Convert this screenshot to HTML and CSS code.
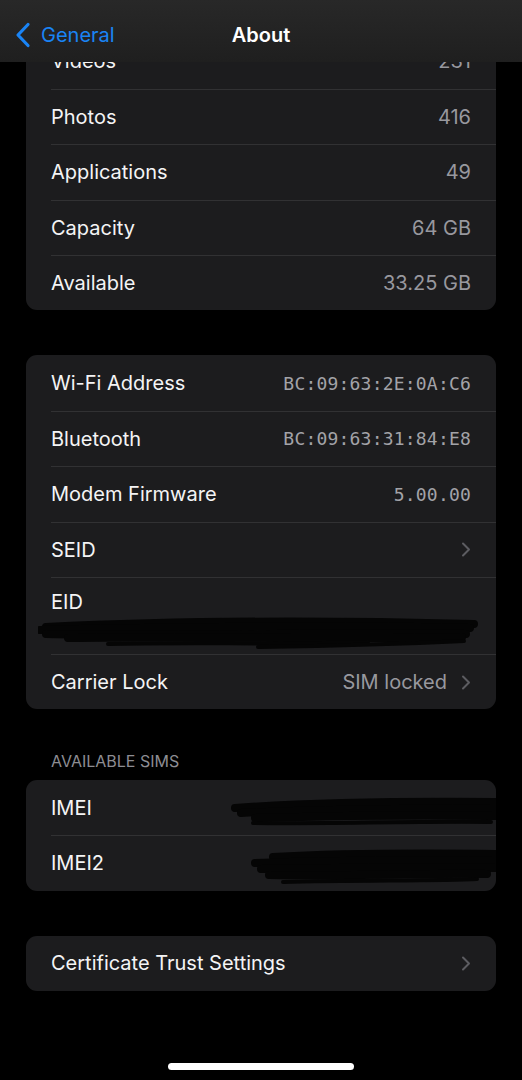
FILE: index.html
```html
<!DOCTYPE html>
<html lang="en">
<head>
  <meta charset="UTF-8" />
  <title>About</title>
  <link rel="stylesheet" href="styles.css">
</head>
<body>
  <div class="screen">
    <header class="navbar">
      <a class="back" href="#general">
        <svg class="back-icon" width="16" height="26" viewBox="0 0 16 26">
          <path d="M13 2.5 L3 13 L13 23.5" fill="none" stroke="currentColor" stroke-width="3.2" stroke-linecap="round" stroke-linejoin="round"/>
        </svg>
        General
      </a>
      <h1 class="title">About</h1>
    </header>

    <main class="content">
      <section class="group first">
        <div class="row"><span class="label">Videos</span><span class="value">231</span></div>
        <div class="row"><span class="label">Photos</span><span class="value">416</span></div>
        <div class="row"><span class="label">Applications</span><span class="value">49</span></div>
        <div class="row"><span class="label">Capacity</span><span class="value">64 GB</span></div>
        <div class="row"><span class="label">Available</span><span class="value">33.25 GB</span></div>
      </section>

      <section class="group">
        <div class="row"><span class="label">Wi-Fi Address</span><span class="value mono">BC:09:63:2E:0A:C6</span></div>
        <div class="row"><span class="label">Bluetooth</span><span class="value mono">BC:09:63:31:84:E8</span></div>
        <div class="row"><span class="label">Modem Firmware</span><span class="value mono">5.00.00</span></div>
        <div class="row link"><span class="label">SEID</span><span class="value"><svg class="chevron" width="10" height="15" viewBox="0 0 10 15"><path d="M2 1.5 L8 7.5 L2 13.5" fill="none" stroke="currentColor" stroke-width="2" stroke-linecap="round" stroke-linejoin="round"/></svg></span></div>
        <div class="row stacked">
          <span class="label">EID</span>
          <span class="value-line"></span>
          <svg class="scribble eid" width="444" height="38" viewBox="0 0 444 38">
            <path d="M8 12 C90 8 240 4 436 9" />
            <path d="M2 15 C120 12 300 10 432 13" />
            <path d="M8 19 C150 22 320 16 428 19" />
            <path d="M30 23 C140 21 290 25 424 22" />
            <path d="M70 29 C150 27 260 30 330 27" class="thin" />
            <path d="M220 32 C280 31 340 30 426 26" class="thin" />
          </svg>
        </div>
        <div class="row link"><span class="label">Carrier Lock</span><span class="value">SIM locked<svg class="chevron" width="10" height="15" viewBox="0 0 10 15"><path d="M2 1.5 L8 7.5 L2 13.5" fill="none" stroke="currentColor" stroke-width="2" stroke-linecap="round" stroke-linejoin="round"/></svg></span></div>
      </section>

      <h2 class="group-header">AVAILABLE SIMS</h2>
      <section class="group sims">
        <div class="row">
          <span class="label">IMEI</span>
          <svg class="scribble imei" width="270" height="34" viewBox="0 0 270 34">
            <path d="M6 12 C60 8 150 5 268 6" />
            <path d="M12 17 C80 14 180 12 268 13" />
            <path d="M26 22 C100 20 200 19 268 20" />
            <path d="M24 27 C90 28 190 25 262 26" class="thin" />
          </svg>
        </div>
        <div class="row">
          <span class="label">IMEI2</span>
          <svg class="scribble imei2" width="252" height="44" viewBox="0 0 252 44">
            <path d="M26 10 C80 7 170 6 250 7" />
            <path d="M8 16 C80 14 170 13 250 14" />
            <path d="M14 22 C90 21 180 20 250 21" />
            <path d="M22 28 C100 29 190 26 240 27" />
            <path d="M36 35 C110 33 190 34 230 32" class="thin" />
          </svg>
        </div>
      </section>

      <section class="group">
        <div class="row link"><span class="label">Certificate Trust Settings</span><span class="value"><svg class="chevron" width="10" height="15" viewBox="0 0 10 15"><path d="M2 1.5 L8 7.5 L2 13.5" fill="none" stroke="currentColor" stroke-width="2" stroke-linecap="round" stroke-linejoin="round"/></svg></span></div>
      </section>
    </main>

    <div class="home-bar"></div>
  </div>
</body>
</html>
```

FILE: styles.css
```css
body {
  margin: 0;
  background: #000;
  font-family: Inter, "Noto Sans", sans-serif;
  color: #f4f4f5;
}

.screen {
  position: relative;
  width: 522px;
  height: 1080px;
  overflow: hidden;
  display: flex;
  flex-direction: column;
  background: #000;
}

.navbar {
  position: absolute;
  top: 0;
  left: 0;
  right: 0;
  height: 62px;
  z-index: 2;
  background: linear-gradient(#282828, #1f1f1f);
  display: flex;
  align-items: center;
  justify-content: center;
}

.back {
  position: absolute;
  left: 15px;
  top: 22px;
  display: flex;
  align-items: center;
  gap: 10px;
  color: #1a84f5;
  text-decoration: none;
  font-size: 20px;
  line-height: 26px;
}

.title {
  margin: 8px 0 0;
  font-size: 20px;
  font-weight: 600;
  color: #fff;
}

.content {
  padding: 0 26px;
}

.group {
  background: #1c1c1e;
  border-radius: 11px;
  overflow: hidden;
  margin-bottom: 45px;
}

.group.first {
  margin-top: 33.4px;
}

.row {
  position: relative;
  box-sizing: border-box;
  height: 55.4px;
  margin-left: 25px;
  padding-right: 25px;
  display: flex;
  align-items: center;
  justify-content: space-between;
  font-size: 20px;
}

.row + .row {
  border-top: 1px solid #313133;
}

.label {
  color: #f4f4f5;
}

.value {
  display: flex;
  align-items: center;
  gap: 14px;
  color: #98989e;
}

.mono {
  font-family: "DejaVu Sans Mono", "Liberation Mono", monospace;
  font-size: 18px;
  letter-spacing: 0.2px;
  color: #a3a3a8;
}

.chevron {
  color: #5c5c61;
}

.row.stacked {
  height: 77px;
  flex-direction: column;
  align-items: flex-start;
  justify-content: flex-start;
  padding-top: 12px;
  line-height: 24px;
}

.value-line {
  height: 24px;
  margin-top: 5px;
}

.scribble {
  position: absolute;
  fill: none;
  stroke: #050505;
  stroke-width: 8;
  stroke-linecap: round;
}

.scribble .thin {
  stroke-width: 4;
}

.scribble.eid {
  left: -13px;
  top: 37px;
}

.scribble.imei {
  left: 178px;
  top: 16px;
}

.scribble.imei2 {
  left: 196px;
  top: 11px;
}

.group-header {
  margin: -3.4px 0 9px 25px;
  font-size: 16px;
  line-height: 20px;
  font-weight: 400;
  color: #8d8d93;
}

.home-bar {
  margin: auto auto 10px;
  width: 186px;
  height: 7px;
  border-radius: 4px;
  background: #fff;
}
```
